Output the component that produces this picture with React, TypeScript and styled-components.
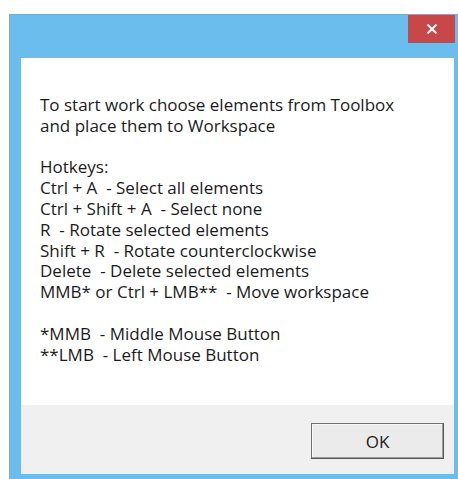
import styled, { createGlobalStyle } from "styled-components";

const GlobalStyle = createGlobalStyle`
  html, body {
    margin: 0;
    padding: 0;
    background: #ffffff;
  }
`;

const Frame = styled.div`
  margin: 14px 0 0 9px;
  width: 449px;
  height: 465px;
  box-sizing: border-box;
  background: #6abdec;
  border-top: 1px solid #84a9c4;
  border-left: 1px solid #84a9c4;
  display: flex;
  flex-direction: column;
  padding: 0 0 5px 11px;
`;

const TitleBar = styled.div`
  height: 43px;
  display: flex;
  justify-content: flex-end;
  align-items: flex-start;
  padding-right: 3px;
  box-sizing: border-box;
`;

const CloseButton = styled.button`
  width: 47px;
  height: 28px;
  border: none;
  background: #c8484a;
  display: flex;
  align-items: center;
  justify-content: center;
  padding: 0;
`;

const Client = styled.div`
  flex: 1;
  margin-right: 4px;
  display: flex;
  flex-direction: column;
  font-family: "Open Sans", "Noto Sans", sans-serif;
  font-size: 17px;
  color: #1b1b1b;
`;

const Message = styled.div`
  flex: 1;
  background: #ffffff;
  padding: 37px 0 0 19px;
  line-height: 20.8px;
`;

const Line = styled.div`
  white-space: pre;
  min-height: 20.8px;
`;

const Footer = styled.div`
  height: 69px;
  background: #f0f0f0;
  display: flex;
  justify-content: flex-end;
  align-items: flex-start;
  padding: 18px 10px 0 0;
  box-sizing: border-box;
`;

const OkButton = styled.button`
  width: 133px;
  height: 36px;
  box-sizing: border-box;
  background: #ebebeb;
  border: 1px solid #707070;
  border-right-color: #555555;
  border-bottom-color: #555555;
  box-shadow: inset -1px -1px 0 #a0a0a0, inset 1px 1px 0 #f8f8f8;
  font-family: "Open Sans", "Noto Sans", sans-serif;
  font-size: 17px;
  color: #1b1b1b;
  padding: 0;
`;

const lines = [
  "To start work choose elements from Toolbox",
  "and place them to Workspace",
  "",
  "Hotkeys:",
  "Ctrl + A  - Select all elements",
  "Ctrl + Shift + A  - Select none",
  "R  - Rotate selected elements",
  "Shift + R  - Rotate counterclockwise",
  "Delete  - Delete selected elements",
  "MMB* or Ctrl + LMB**  - Move workspace",
  "",
  "*MMB  - Middle Mouse Button",
  "**LMB  - Left Mouse Button",
];

export default function App() {
  return (
    <>
      <GlobalStyle />
      <Frame>
        <TitleBar>
          <CloseButton aria-label="Close">
            <svg width="12" height="10" viewBox="0 0 12 10">
              <path d="M1.5 0.5 L10.5 9.5 M10.5 0.5 L1.5 9.5" stroke="#fff" strokeWidth="2" />
            </svg>
          </CloseButton>
        </TitleBar>
        <Client>
          <Message>
            {lines.map((text, i) => (
              <Line key={i}>{text}</Line>
            ))}
          </Message>
          <Footer>
            <OkButton>OK</OkButton>
          </Footer>
        </Client>
      </Frame>
    </>
  );
}
